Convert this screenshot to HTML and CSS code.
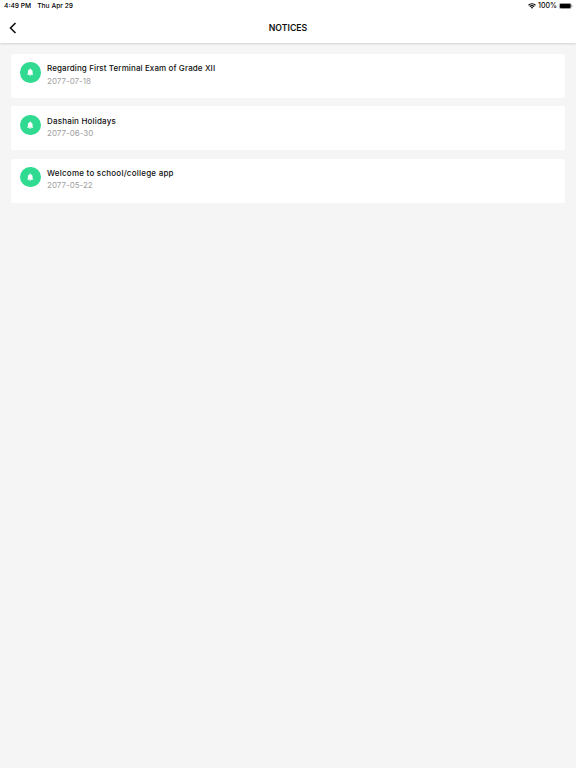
FILE: index.html
```html
<!DOCTYPE html>
<html lang="en">
<head>
<meta charset="utf-8">
<title>Notices</title>
<link rel="stylesheet" href="styles.css">
</head>
<body>
<svg class="defs" width="0" height="0"><symbol id="bell" viewBox="0 0 24 24"><path d="M12 1.5a1.9 1.9 0 0 0-1.9 1.9v.8C7 5 5.3 7.7 5.3 11v5L3.3 18v1.2h17.4V18l-2-2v-5c0-3.3-1.7-6-4.8-6.8v-.8A1.9 1.9 0 0 0 12 1.5zM9.7 20.2a2.3 2.3 0 0 0 4.6 0z" fill="#fff"/></symbol></svg>
<header class="header">
  <div class="status">
    <div class="status-left"><span class="time">4:49 PM</span><span class="day">Thu Apr 29</span></div>
    <div class="status-right">
      <svg class="wifi" viewBox="0 0 16 12"><g fill="none" stroke="#000" stroke-width="2.4"><path d="M1 4.4a10 10 0 0 1 14 0"/><path d="M3.6 7.2a6.3 6.3 0 0 1 8.8 0"/></g><path d="M5.5 9.1a3.6 3.6 0 0 1 5 0L8 11.7z"/></svg>
      <span class="percent">100%</span>
      <svg class="battery" viewBox="0 0 14 6"><rect x=".25" y=".25" width="12" height="5.5" rx="1.6" fill="none" stroke="#777" stroke-width=".5"/><rect x=".8" y=".8" width="10.9" height="4.4" rx="1.1"/><path d="M12.8 2v2q.8-.3.8-1t-.8-1z" fill="#888"/></svg>
    </div>
  </div>
  <div class="nav">
    <svg class="back" viewBox="0 0 8 12"><path d="M6.5 1 1.5 6l5 5" fill="none" stroke="#111" stroke-width="1.6"/></svg>
    <h1 class="heading">NOTICES</h1>
  </div>
</header>
<main class="list">
  <article class="card"><span class="badge"><svg class="bell"><use href="#bell"/></svg></span><div class="text"><h2 class="title first">Regarding First Terminal Exam of Grade XII</h2><p class="date">2077-07-18</p></div></article>
  <article class="card"><span class="badge"><svg class="bell"><use href="#bell"/></svg></span><div class="text"><h2 class="title second">Dashain Holidays</h2><p class="date">2077-06-30</p></div></article>
  <article class="card"><span class="badge"><svg class="bell"><use href="#bell"/></svg></span><div class="text"><h2 class="title third">Welcome to school/college app</h2><p class="date">2077-05-22</p></div></article>
</main>
</body>
</html>
```
FILE: styles.css
```css
* { box-sizing: border-box; }
body { margin: 0; min-height: 768px; background: #f5f5f5; color: #111; font-family: Inter, sans-serif; }
h1, h2, p { margin: 0; }
.defs { position: absolute; }
.header { height: 42.5px; background: #fff; box-shadow: 0 1px 2px rgba(0,0,0,.15); }
.status { height: 12px; padding: 0 3px 0 4px; display: flex; justify-content: space-between; font-size: 7px; line-height: 12px; font-weight: 500; color: #000; }
.status-left, .status-right { display: flex; align-items: center; white-space: nowrap; }
.status-left { font-size: 6.7px; }
.day { margin-left: 6px; }
.wifi { width: 8px; height: 6px; margin-right: 2px; }
.battery { width: 14px; height: 6px; margin-left: 2px; }
.nav { height: 31px; display: grid; grid-template-columns: 40px 1fr 40px; align-items: center; }
.back { width: 8px; height: 12px; margin-left: 8.6px; }
.heading { text-align: center; font-size: 8.7px; line-height: 12px; font-weight: 600; }
.list { padding: 11.5px 11.5px 11.5px 11px; display: grid; gap: 8.25px; }
.card { height: 44px; padding: 8.4px 9px; display: flex; gap: 6.5px; background: #fff; border-radius: 2px; }
.badge { width: 20.5px; height: 20.5px; flex: none; display: grid; place-items: center; border-radius: 50%; background: #30db91; }
.bell { width: 8.5px; height: 8.5px; display: block; }
.text { margin-top: -.1px; white-space: nowrap; }
.title { font-size: 8px; line-height: 12.3px; font-weight: 500; }
.first { letter-spacing: .11px; }
.second { letter-spacing: .18px; }
.third { letter-spacing: .23px; }
.date { font-size: 8px; line-height: 12px; font-weight: 400; color: #a0a0a0; }
```
